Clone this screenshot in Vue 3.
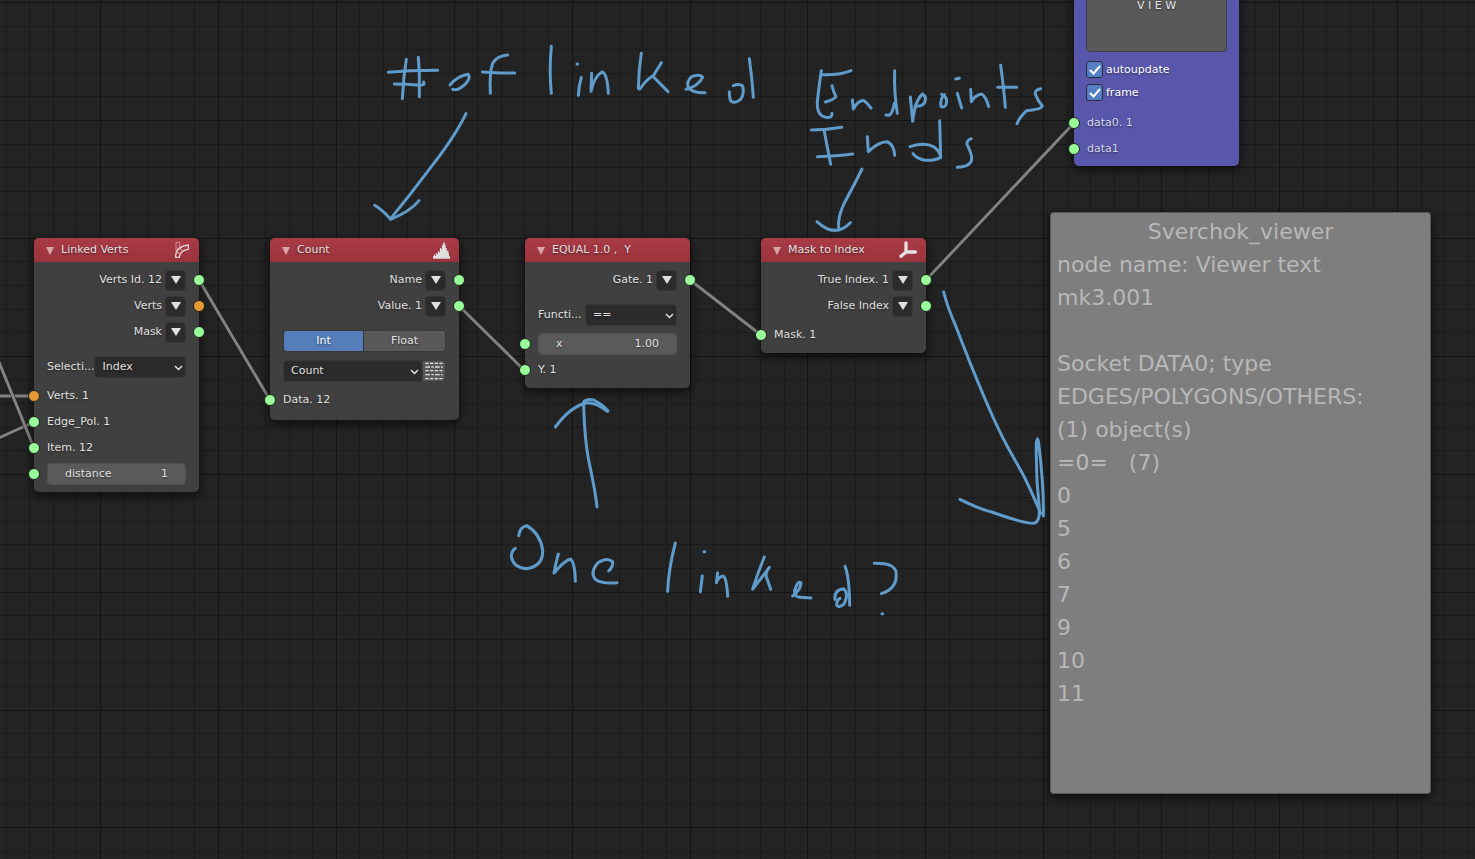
<script setup>
import { ref } from 'vue'

const EXTENT = 4000
const CELLS = Array.from({ length: 170 }, (_, i) => i)
const gridAt = (i, origin) => Math.round(origin + (i * 117.9) / 5)

const gridPath = (major) =>
  CELLS.map((i) => {
    let d = ''
    if ((i % 5 === 4) === major) d += `M${gridAt(i, 5.7)} 0h1v${EXTENT}h-1z`
    if ((i % 5 === 0) === major) d += `M0 ${gridAt(i, 2.1)}h${EXTENT}v1h-${EXTENT}z`
    return d
  }).join('')

const minorGrid = gridPath(false)
const majorGrid = gridPath(true)

const links = [
  'M-10 396H34',
  'M-10 442L34 422',
  'M-10 340L34 448',
  'M199 280L270 400',
  'M459 306L525 371',
  'M690 280L761 335',
  'M926 280L1074 123'
]

const nodes = [
  {
    id: 'linked', title: 'Linked Verts', icon: 'arc', x: 34, y: 238, width: 165,
    outputs: [
      { label: 'Verts Id. 12', color: 'green' },
      { label: 'Verts', color: 'orange' },
      { label: 'Mask', color: 'green' }
    ],
    select: { label: 'Selecti...', value: 'Index' },
    inputs: [
      { label: 'Verts. 1', color: 'orange' },
      { label: 'Edge_Pol. 1', color: 'green' },
      { label: 'Item. 12', color: 'green' },
      { label: 'distance', color: 'green', value: '1' }
    ]
  },
  {
    id: 'count', title: 'Count', icon: 'histogram', x: 270, y: 238, width: 189,
    outputs: [
      { label: 'Name', color: 'green' },
      { label: 'Value. 1', color: 'green' }
    ],
    modes: ['Int', 'Float'],
    select: { value: 'Count', extra: true },
    inputs: [{ label: 'Data. 12', color: 'green' }]
  },
  {
    id: 'equal', title: 'EQUAL 1.0 ,  Y', x: 525, y: 238, width: 165,
    outputs: [{ label: 'Gate. 1', color: 'green' }],
    select: { label: 'Functi...', value: '==' },
    inputs: [
      { label: 'x', color: 'green', value: '1.00' },
      { label: 'Y. 1', color: 'green' }
    ]
  },
  {
    id: 'mask', title: 'Mask to Index', icon: 'axes', x: 761, y: 238, width: 165,
    outputs: [
      { label: 'True Index. 1', color: 'green' },
      { label: 'False Index', color: 'green' }
    ],
    inputs: [{ label: 'Mask. 1', color: 'green' }]
  }
]

const mode = ref('Int')
const options = ref([
  { id: 'autoupdate', on: true },
  { id: 'frame', on: true }
])

const place = (n) => ({ left: `${n.x}px`, top: `${n.y}px`, width: `${n.width}px` })

const sheet = { x: 1050, y: 212, width: 381, height: 582 }
const sheetLines = [
  'node name: Viewer text',
  'mk3.001',
  '',
  'Socket DATA0; type',
  'EDGES/POLYGONS/OTHERS:',
  '(1) object(s)',
  '=0=   (7)',
  '0', '5', '6', '7', '9', '10', '11'
]

// Pen strokes, three units per screen pixel, relative to each note's origin.
const notes = [
  {
    x: 370, y: 30,
    strokes: [
      'M55 127L120 122L203 121', 'M73 162L110 163L150 166L162 163L161 156',
      'M109 88L102 140L97 206', 'M145 82L148 130L148 200',
      'M240 165Q262 138 295 133Q303 145 285 163Q262 184 248 178',
      'M413 75Q380 78 368 100Q358 125 361 190', 'M337 126L390 129L434 129',
      'M544 49Q537 120 544 190', 'M621 102h2', 'M634 142Q627 165 625 196',
      'M665 130L663 184Q672 140 696 126Q712 130 715 190',
      'M814 70Q806 120 805 175Q808 179 812 174Q830 148 848 138L894 185', 'M874 98L848 140',
      'M948 178Q985 168 998 142Q990 130 965 140Q948 155 955 175Q975 190 1005 188',
      'M1090 167Q1108 160 1118 168Q1124 190 1112 208Q1095 222 1083 214Q1078 205 1078 185',
      'M1138 86Q1146 140 1150 202',
      'M288 251Q255 320 180 415Q120 495 62 566', 'M14 526Q40 542 62 568Q120 545 147 512'
    ]
  },
  {
    x: 790, y: 50,
    strokes: [
      'M94 62Q88 100 82 155Q80 198 108 202Q128 204 126 190', 'M97 74Q150 76 183 62',
      'M126 107Q130 125 138 140Q130 150 106 156',
      'M187 150L190 177Q205 150 222 152Q232 160 243 174',
      'M314 62Q312 130 322 190', 'M313 160Q308 190 298 196L288 195',
      'M361 141L368 214Q375 150 398 132Q412 140 403 160Q390 172 375 168',
      'M463 134Q450 145 453 170Q468 175 470 155Q470 138 455 133',
      'M497 87L508 85', 'M502 130L515 174',
      'M542 118L544 155Q555 135 575 132Q588 140 596 170',
      'M632 46Q642 120 646 172', 'M623 112L680 112',
      'M752 116Q732 120 737 135Q745 155 757 168Q755 178 710 182Q690 200 681 221',
      'M64 240L110 238L155 232', 'M102 240L122 343', 'M82 320Q140 318 188 312',
      'M232 260L235 305Q265 275 292 275Q312 285 314 316',
      'M360 290Q405 276 430 290Q448 300 452 322Q435 332 405 331Q380 326 369 311',
      'M449 212L452 322',
      'M544 266Q530 270 531 283Q545 310 545 325Q545 350 502 352',
      'M216 357Q195 400 165 455Q142 500 146 535', 'M81 515Q135 566 181 518'
    ]
  },
  {
    x: 490, y: 380,
    strokes: [
      'M321 381Q317 340 300 260Q284 190 281 75', 'M196 141Q240 80 290 68Q320 68 352 94',
      'M281 66Q290 55 312 60Q335 72 354 92',
      'M86 467Q90 440 110 437Q150 460 158 510Q160 560 108 566Q70 562 64 530Q64 512 76 505',
      'M205 522Q197 550 192 579Q225 540 242 537Q255 550 256 604',
      'M356 573Q370 560 368 545Q350 530 322 550Q298 580 318 600Q340 612 381 608',
      'M556 489Q535 570 533 634', 'M642 515h2', 'M637 588L631 635',
      'M683 579L679 608Q685 590 700 588Q710 595 713 649',
      'M823 531Q805 575 788 627Q825 580 838 562Q825 575 829 590L842 628',
      'M908 648Q932 630 933 608Q925 602 918 620Q905 650 930 652L963 654',
      'M1065 559Q1078 590 1079 676',
      'M1035 658Q1032 630 1060 626Q1078 640 1062 672Q1045 686 1040 675Q1040 660 1050 655',
      'M1153 550Q1210 548 1218 575Q1225 625 1174 641', 'M1176 701h2'
    ]
  },
  {
    x: 930, y: 270,
    strokes: [
      'M41 66Q52 110 78 170Q120 280 160 375Q200 470 235 535L280 615Q305 665 332 730',
      'M90 688Q150 718 185 726Q280 760 310 760Q330 758 328 715Q317 620 319 520Q322 492 326 520Q342 650 340 738'
    ]
  }
]
</script>

<template>
  <main class="editor">
    <svg class="layer" aria-hidden="true">
      <path class="grid-minor" :d="minorGrid" />
      <path class="grid-major" :d="majorGrid" />
      <g v-for="d in links" :key="d">
        <path class="link-edge" :d="d" />
        <path class="link" :d="d" />
      </g>
    </svg>

    <section v-for="n in nodes" :key="n.id" class="node" :class="'node-' + n.id" :style="place(n)">
      <header class="head">
        <button class="fold" type="button" :aria-label="'Collapse ' + n.title">
          <svg width="8" height="8" viewBox="0 0 8 8"><path d="M0 0h8L4 8z" fill="currentColor" /></svg>
        </button>
        <h2 class="title">{{ n.title }}</h2>
        <svg v-if="n.icon === 'arc'" class="icon" width="16" height="18" viewBox="0 0 48 54">
          <path d="M6 30V4h11v17" fill="none" stroke="#d58d92" stroke-width="3" />
          <path d="M5 49V42Q8 16 43 12V25Q18 28 16 49Z" fill="none" stroke="#e6d4d5" stroke-width="4" stroke-linejoin="round" />
          <path d="M7 33L17 38M17 21L25 29" stroke="#e6d4d5" stroke-width="3" />
        </svg>
        <svg v-else-if="n.icon === 'histogram'" class="icon" width="17" height="17" viewBox="0 0 51 51">
          <path fill="#dedede" d="M0 50V43H3V37H6V41H9V33H12V36H15V27H18V31H21V18H24V21H27V10H30V3H33V0H35V8H38V18H41V28H44V24H46V34H48V43H51V50Z" />
        </svg>
        <svg v-else-if="n.icon === 'axes'" class="icon" width="18" height="18" viewBox="0 0 54 54">
          <path d="M21 6V33H49M21 33L6 46" fill="none" stroke="#e2e2e2" stroke-width="10" stroke-linecap="round" />
        </svg>
      </header>

      <div class="body">
        <div v-for="o in n.outputs" :key="o.label" class="row output">
          <span>{{ o.label }}</span>
          <button class="drop" type="button" :aria-label="o.label + ' options'">
            <svg width="10" height="8" viewBox="0 0 10 8"><path d="M0 0h10L5 8z" fill="#e0e0e0" /></svg>
          </button>
          <i class="socket right" :class="o.color"></i>
        </div>

        <div v-if="n.modes || n.select" class="controls">
          <div v-if="n.modes" class="row">
            <div class="segments">
              <button
                v-for="m in n.modes" :key="m" type="button" class="segment"
                :class="{ active: m === mode }" :aria-pressed="m === mode" @click="mode = m"
              >{{ m }}</button>
            </div>
          </div>
          <div v-if="n.select" class="row">
            <label v-if="n.select.label" class="select-label" :for="n.id + '-select'">{{ n.select.label }}</label>
            <div class="select-box" :class="{ joined: n.select.extra }">
              <select :id="n.id + '-select'" :aria-label="n.select.label ? undefined : n.title + ' function'">
                <option>{{ n.select.value }}</option>
              </select>
              <svg class="chevron" width="9" height="6" viewBox="0 0 9 6"><path d="M1 1l3.500 3.500L8 1" fill="none" stroke="#e0e0e0" stroke-width="1.500" /></svg>
            </div>
            <button v-if="n.select.extra" class="list-button" type="button" aria-label="List options">
              <svg width="18" height="18" viewBox="0 0 54 54">
                <g stroke="#dcdcdc" stroke-width="4">
                  <path d="M1 4H53M1 26H53M1 50H53" stroke-dasharray="10 4" />
                  <path d="M1 15H53M1 38H53" stroke-dasharray="14 4 7 4" />
                </g>
              </svg>
            </button>
          </div>
        </div>

        <div class="inputs">
          <div v-for="s in n.inputs" :key="s.label" class="row">
            <i class="socket left" :class="s.color"></i>
            <label v-if="s.value" class="field">
              <span>{{ s.label }}</span>
              <input type="text" :value="s.value" />
            </label>
            <span v-else>{{ s.label }}</span>
          </div>
        </div>
      </div>
    </section>

    <section class="node viewer">
      <button class="view-button" type="button">V I E W</button>
      <div class="checks">
        <label v-for="o in options" :key="o.id" class="check">
          <input v-model="o.on" type="checkbox" />
          <svg v-show="o.on" class="tick" width="12" height="10" viewBox="0 0 12 10"><path d="M1 5l3.500 3.500L11 1" fill="none" stroke="#fff" stroke-width="2" /></svg>
          <span>{{ o.id }}</span>
        </label>
      </div>
      <div class="row"><i class="socket left green"></i><span>data0. 1</span></div>
      <div class="row"><i class="socket left green"></i><span>data1</span></div>
    </section>

    <article class="sheet" :style="{ ...place(sheet), height: sheet.height + 'px' }">
      <h2>Sverchok_viewer</h2>
      <p v-for="(line, i) in sheetLines" :key="i">{{ line }}</p>
    </article>

    <svg class="layer ink" aria-hidden="true">
      <g v-for="note in notes" :key="note.x" :transform="`translate(${note.x} ${note.y}) scale(${1 / 3})`">
        <path v-for="d in note.strokes" :key="d" :d="d" />
      </g>
    </svg>
  </main>
</template>

<style>
body {
  margin: 0;
  background: #232323;
}
</style>

<style scoped>
.editor {
  position: relative;
  min-height: 100vh;
  overflow: hidden;
  background: #232323;
  color: #e0e0e0;
  font: 11px/16px "DejaVu Sans", sans-serif;
}
.editor * { box-sizing: border-box; }
button, input, select { font: inherit; color: inherit; margin: 0; padding: 0; border: 0; text-shadow: inherit; }
button { display: grid; place-items: center; }
svg { display: block; }

.layer { position: absolute; inset: 0; width: 100%; height: 100%; }
.grid-minor { fill: #1b1b1b; }
.grid-major { fill: #141414; }
.link-edge { fill: none; stroke: #1c1c1c; stroke-width: 4; }
.link { fill: none; stroke: #828282; stroke-width: 3; }
.ink { pointer-events: none; fill: none; stroke: #5f9ccb; stroke-width: 9; stroke-linecap: round; stroke-linejoin: round; }

.node {
  position: absolute;
  border-radius: 5px;
  background: rgba(67, 67, 67, 0.93);
  box-shadow: 0 3px 9px 1px rgba(0, 0, 0, 0.6);
  text-shadow: 0 1px 2px rgba(0, 0, 0, 0.5);
}
.head {
  display: flex;
  align-items: center;
  height: 24px;
  padding: 0 9px 0 11px;
  border-radius: 5px 5px 0 0;
  background: linear-gradient(#aa3b46, #9a333c);
}
.fold { width: 9px; height: 16px; padding-top: 2px; background: none; color: #d8a5a9; }
.title { flex: 1; margin: 0 0 0 7px; font: inherit; white-space: pre; }
.body { padding: 5px 13px; }
.node-count .body { padding-bottom: 7px; }
.row { position: relative; display: flex; align-items: center; height: 26px; }
.output { justify-content: flex-end; gap: 3px; }
.drop { width: 21px; height: 21px; border: 1px solid #363636; border-radius: 4px; background: #2b2b2b; }
.controls { display: grid; gap: 4px; margin-top: 9px; }
.inputs { margin-top: 3px; }

.socket { position: absolute; width: 12px; height: 12px; border: 1px solid #202020; border-radius: 50%; }
.left { left: -19px; }
.right { right: -19px; }
.green { background: #98fe98; }
.orange { background: #e59933; }

.select-label { flex: 0 0 47px; }
.select-box { flex: 1; display: grid; align-items: center; min-width: 0; }
.select-box select {
  grid-area: 1 / 1;
  appearance: none;
  width: 100%;
  height: 22px;
  padding: 0 7px;
  border: 1px solid #383838;
  border-radius: 4px;
  background: #2b2b2b;
}
.chevron { grid-area: 1 / 1; justify-self: end; margin: 1px 3px 0 0; pointer-events: none; }
.joined select { border-radius: 4px 0 0 4px; }
.list-button { width: 24px; height: 22px; border: 1px solid #3a3a3a; border-radius: 0 4px 4px 0; background: #585858; }

.segments { display: grid; grid-template-columns: 79px 1fr; flex: 1; height: 22px; overflow: hidden; border: 1px solid #383838; border-radius: 4px; }
.segment { background: #595959; }
.segment + .segment { border-left: 1px solid #383838; }
.active { background: #557db9; color: #fff; }

.field { display: flex; flex: 1; align-items: center; height: 22px; padding: 0 17px; border: 1px solid #505050; border-radius: 4px; background: #5a5a5a; }
.field input { flex: 1; min-width: 0; width: 100%; background: none; text-align: right; }

.viewer { left: 1074px; top: -56px; width: 165px; padding: 13px 12px 4px; background: rgba(93, 91, 180, 0.95); color: #d8d8e8; }
.viewer .row { padding-left: 1px; }
.viewer .left { left: -18px; }
.view-button { width: 100%; height: 95px; padding-top: 2px; border: 1px solid #3c3c4c; border-radius: 4px; background: #595959; color: #e8e8e8; }
.checks { margin: 6px 0; color: #fff; }
.check { display: grid; grid-template-columns: 17px 1fr; align-items: center; column-gap: 3px; height: 23px; }
.check input { grid-area: 1 / 1; appearance: none; width: 17px; height: 17px; border: 1px solid #2c2c3c; border-radius: 3px; background: #557fc4; }
.tick { grid-area: 1 / 1; justify-self: center; pointer-events: none; }

.sheet {
  position: absolute;
  padding: 2px 6px;
  border: 1px solid rgba(80, 80, 80, 0.8);
  border-radius: 4px;
  background: rgba(132, 132, 132, 0.94);
  box-shadow: 0 3px 9px 1px rgba(0, 0, 0, 0.6);
  color: #b8b8b8;
  font-size: 22px;
  line-height: 33px;
}
.sheet h2, .sheet p { min-height: 33px; margin: 0; font: inherit; white-space: pre; }
.sheet h2 { text-align: center; }
</style>
